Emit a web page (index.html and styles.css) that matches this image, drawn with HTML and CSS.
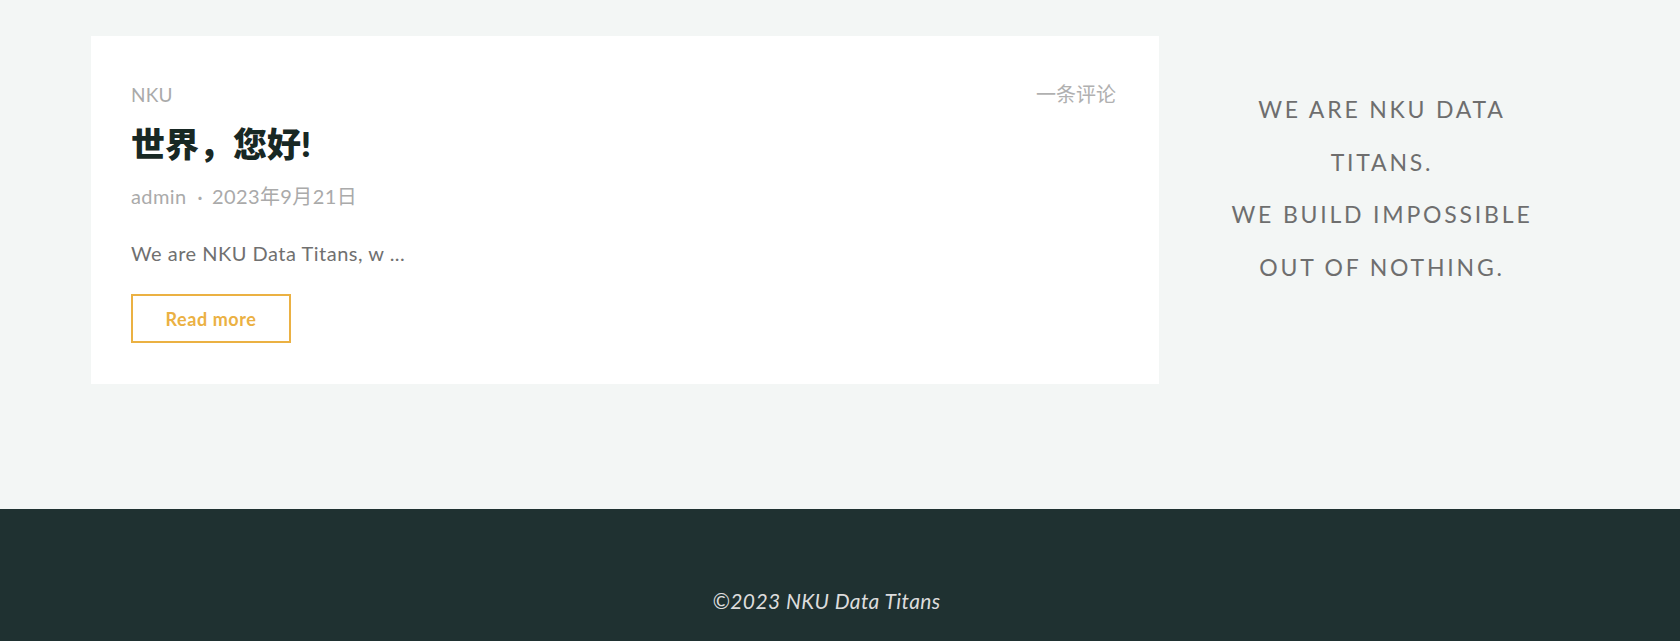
FILE: index.html
```html
<!DOCTYPE html>
<html lang="zh-CN">
<head>
<meta charset="utf-8">
<title>NKU Data Titans</title>
<link rel="stylesheet" href="styles.css">
</head>
<body>
<main class="content">
  <div class="wrap">
    <article class="post-card">
      <div class="post-top">
        <a class="post-cat" href="#">NKU</a>
        <a class="post-comments" href="#">一条评论</a>
      </div>
      <h2 class="post-title">世界，您好!</h2>
      <div class="post-meta"><span class="author">admin</span><span class="dot">・</span><span class="date">2023年9月21日</span></div>
      <p class="post-excerpt">We are NKU Data Titans, w ...</p>
      <a class="read-more" href="#">Read more</a>
    </article>
    <aside class="sidebar">
      <p class="motto">WE ARE NKU DATA<br>TITANS.<br>WE BUILD IMPOSSIBLE<br>OUT OF NOTHING.</p>
    </aside>
  </div>
</main>
<footer class="site-footer">
  <p class="copy">©2023 NKU Data Titans</p>
</footer>
</body>
</html>
```
FILE: styles.css
```css
* { box-sizing: border-box; }
html, body { margin: 0; padding: 0; }
body {
  background: #f3f6f5;
  font-family: Lato, "Noto Sans CJK SC", sans-serif;
  color: #707070;
}
a { text-decoration: none; }
.content {
  padding: 36px 91px 125px;
}
.wrap {
  display: flex;
  align-items: flex-start;
  gap: 16px;
}
.post-card {
  width: 1068px;
  flex: none;
  background: #fff;
  padding: 40px 40px 41px 40px;
}
.post-top {
  display: flex;
  justify-content: space-between;
  align-items: baseline;
  line-height: 24px;
  margin-top: 6px;
}
.post-cat { color: #aaaaaa; font-size: 19px; letter-spacing: 0.2px; }
.post-comments { color: #b0b0b0; font-size: 20px; margin-right: 3px; }
.post-title {
  margin: 15px 0 0;
  font-family: Lato, "Noto Sans CJK SC", sans-serif;
  font-size: 34px;
  line-height: 44px;
  font-weight: 800;
  color: #182824;
}
.post-meta {
  margin-top: 18px;
  font-size: 20px;
  line-height: 24px;
  letter-spacing: 0.4px;
  color: #aaaaaa;
}
.dot { font-size: 15px; margin: 0 4px 0 6px; }
.post-excerpt {
  margin: 30px 0 0;
  font-size: 20px;
  line-height: 26px;
  letter-spacing: 0.5px;
  color: #707070;
}
.read-more {
  display: inline-flex;
  align-items: center;
  justify-content: center;
  margin-top: 28px;
  width: 160px;
  height: 49px;
  border: 2px solid #ebb143;
  color: #ebb143;
  font-weight: 700;
  font-size: 18px;
  letter-spacing: 0.6px;
}
.sidebar {
  flex: 1;
  text-align: center;
  padding-top: 47px;
}
.motto {
  margin: 0;
  font-size: 23px;
  line-height: 52.5px;
  letter-spacing: 2.8px;
  color: #6e6e6e;
}
.site-footer {
  background: #1f3131;
  min-height: 140px;
  display: flex;
  justify-content: center;
  padding: 80px 27px 0 0;
}
.copy {
  margin: 0;
  font-style: italic;
  font-size: 21px;
  line-height: 24px;
  letter-spacing: 0.4px;
  color: #dcdcdc;
}
```
